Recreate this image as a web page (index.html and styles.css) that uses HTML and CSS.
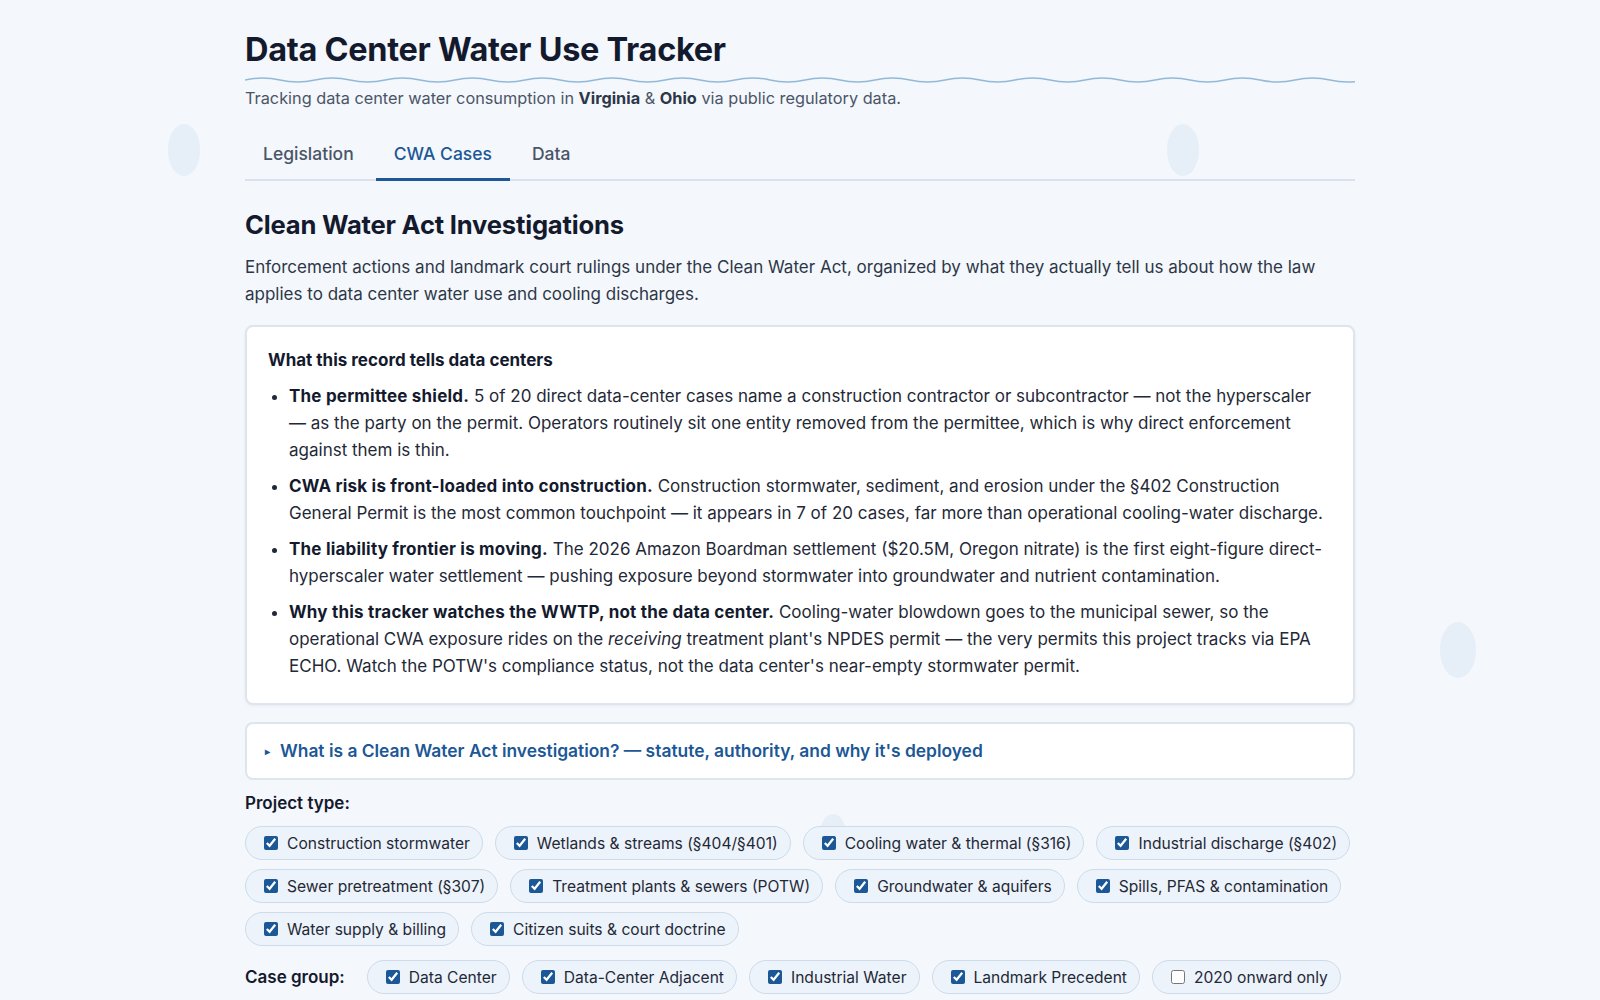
FILE: index.html
```html
<!DOCTYPE html>
<html lang="en">
<head>
    <meta charset="UTF-8">
    <meta name="viewport" content="width=device-width, initial-scale=1.0">
    <title>Data Center Water Use Tracker</title>
    <link rel="stylesheet" href="styles.css">
</head>
<body>
    <!-- decorative bubbles -->
    <span class="bubble bubble-a"></span>
    <span class="bubble bubble-b"></span>
    <span class="bubble bubble-c"></span>
    <span class="bubble bubble-d"></span>

    <div class="container">
        <header class="site-header">
            <h1>Data Center Water Use Tracker</h1>
            <svg class="wave" viewBox="0 0 1110 8" preserveAspectRatio="none">
                <path d="M0 4 q17.5 -4 35 0 t35 0 t35 0 t35 0 t35 0 t35 0 t35 0 t35 0 t35 0 t35 0 t35 0 t35 0 t35 0 t35 0 t35 0 t35 0 t35 0 t35 0 t35 0 t35 0 t35 0 t35 0 t35 0 t35 0 t35 0 t35 0 t35 0 t35 0 t35 0 t35 0 t35 0 t35 0" fill="none" stroke="#93b9d9" stroke-width="1.5"/>
            </svg>
            <p class="tagline">Tracking data center water consumption in <strong>Virginia</strong> &amp; <strong>Ohio</strong> via public regulatory data.</p>
        </header>

        <nav class="tabs">
            <a href="#" class="tab">Legislation</a>
            <a href="#" class="tab active">CWA Cases</a>
            <a href="#" class="tab">Data</a>
        </nav>

        <section class="panel">
            <h2>Clean Water Act Investigations</h2>
            <p class="intro">Enforcement actions and landmark court rulings under the Clean Water Act, organized by what they actually tell us about how the law applies to data center water use and cooling discharges.</p>

            <div class="card">
                <h3>What this record tells data centers</h3>
                <ul class="findings">
                    <li><strong>The permittee shield.</strong> 5 of 20 direct data-center cases name a construction contractor or subcontractor — not the hyperscaler — as the party on the permit. Operators routinely sit one entity removed from the permittee, which is why direct enforcement against them is thin.</li>
                    <li><strong>CWA risk is front-loaded into construction.</strong> Construction stormwater, sediment, and erosion under the §402 Construction General Permit is the most common touchpoint — it appears in 7 of 20 cases, far more than operational cooling-water discharge.</li>
                    <li><strong>The liability frontier is moving.</strong> The 2026 Amazon Boardman settlement ($20.5M, Oregon nitrate) is the first eight-figure direct-hyperscaler water settlement — pushing exposure beyond stormwater into groundwater and nutrient contamination.</li>
                    <li><strong>Why this tracker watches the WWTP, not the data center.</strong> Cooling-water blowdown goes to the municipal sewer, so the operational CWA exposure rides on the <em>receiving</em> treatment plant's NPDES permit — the very permits this project tracks via EPA ECHO. Watch the POTW's compliance status, not the data center's near-empty stormwater permit.</li>
                </ul>
            </div>

            <details class="explainer">
                <summary>What is a Clean Water Act investigation? — statute, authority, and why it's deployed</summary>
            </details>

            <div class="filter-group">
                <div class="filter-label">Project type:</div>
                <div class="chips">
                    <label class="chip"><input type="checkbox" checked> Construction stormwater</label>
                    <label class="chip"><input type="checkbox" checked> Wetlands &amp; streams (§404/§401)</label>
                    <label class="chip"><input type="checkbox" checked> Cooling water &amp; thermal (§316)</label>
                    <label class="chip"><input type="checkbox" checked> Industrial discharge (§402)</label>
                    <label class="chip"><input type="checkbox" checked> Sewer pretreatment (§307)</label>
                    <label class="chip"><input type="checkbox" checked> Treatment plants &amp; sewers (POTW)</label>
                    <label class="chip"><input type="checkbox" checked> Groundwater &amp; aquifers</label>
                    <label class="chip"><input type="checkbox" checked> Spills, PFAS &amp; contamination</label>
                    <label class="chip"><input type="checkbox" checked> Water supply &amp; billing</label>
                    <label class="chip"><input type="checkbox" checked> Citizen suits &amp; court doctrine</label>
                </div>
            </div>

            <div class="filter-row">
                <span class="filter-label">Case group:</span>
                <label class="chip"><input type="checkbox" checked> Data Center</label>
                <label class="chip"><input type="checkbox" checked> Data-Center Adjacent</label>
                <label class="chip"><input type="checkbox" checked> Industrial Water</label>
                <label class="chip"><input type="checkbox" checked> Landmark Precedent</label>
                <label class="chip"><input type="checkbox"> 2020 onward only</label>
            </div>
        </section>
    </div>
</body>
</html>
```
FILE: styles.css
```css
body {
    margin: 0;
    background: #f4f7fb;
    color: #1f2937;
    font-family: Inter, "Noto Sans", sans-serif;
}

.container {
    max-width: 1110px;
    margin: 0 auto;
    position: relative;
    z-index: 1;
}

/* Cabecera */
.site-header {
    padding-top: 30px;
}

h1 {
    margin: 0;
    font-size: 32.5px;
    font-weight: 700;
    color: #141a2e;
    letter-spacing: -0.3px;
}

.wave {
    display: block;
    width: 100%;
    height: 8px;
    margin-top: 7px;
}

.tagline {
    margin: 4px 0 0;
    font-size: 16.3px;
    color: #4a5568;
}

.tagline strong {
    color: #2d3748;
}

/* Pestañas */
.tabs {
    display: flex;
    gap: 4px;
    margin-top: 23px;
    border-bottom: 2px solid #d9e2ec;
}

.tab {
    padding: 12px 18px 14px;
    margin-bottom: -2px;
    font-size: 17.5px;
    font-weight: 500;
    color: #4a5568;
    text-decoration: none;
    border-bottom: 3px solid transparent;
}

.tab.active {
    color: #1c5796;
    border-bottom-color: #1c5796;
}

/* Contenido */
.panel h2 {
    margin: 28px 0 0;
    font-size: 25.6px;
    font-weight: 700;
    color: #141a2e;
    letter-spacing: -0.2px;
}

.intro {
    margin: 14px 0 0;
    font-size: 17px;
    line-height: 27px;
    color: #2d3748;
}

.card {
    margin-top: 17px;
    padding: 23px 21px 14px;
    background: #fff;
    border: 2px solid #dde5ee;
    border-radius: 8px;
    box-shadow: 0 1px 3px rgba(30, 50, 80, 0.06);
}

.card h3 {
    margin: 0;
    font-size: 17px;
    font-weight: 700;
    color: #141a2e;
}

.findings {
    margin: 13px 0 0;
    padding-left: 21px;
    font-size: 17px;
    line-height: 27px;
    color: #1f2937;
}

.findings li {
    margin-bottom: 9px;
}

.findings strong {
    color: #141a2e;
    letter-spacing: 0.2px;
}

.explainer {
    margin-top: 17px;
    padding: 16px 18px 17px;
    background: #fff;
    border: 2px solid #dde5ee;
    border-radius: 8px;
}

.explainer summary {
    list-style: none;
    font-size: 17.4px;
    font-weight: 600;
    color: #1c5796;
    cursor: pointer;
}

.explainer summary::-webkit-details-marker {
    display: none;
}

.explainer summary::before {
    content: "▸";
    display: inline-block;
    width: 15px;
    font-size: 10px;
    vertical-align: 2px;
}

/* Filtros */
.filter-group {
    margin-top: 13px;
}

.filter-label {
    font-size: 17px;
    font-weight: 600;
    color: #141a2e;
}

.chips {
    display: flex;
    flex-wrap: wrap;
    gap: 9px 12px;
    margin-top: 13px;
}

.chip {
    display: inline-flex;
    align-items: center;
    gap: 6px;
    padding: 6px 12px 6px 14px;
    height: 34px;
    box-sizing: border-box;
    font-size: 15.6px;
    color: #1f2937;
    background: #edf3fa;
    border: 1.5px solid #cddbea;
    border-radius: 999px;
}

.chip input {
    width: 14px;
    height: 14px;
    margin: 0 3px 0 4px;
    accent-color: #1c5796;
}

.filter-row {
    display: flex;
    align-items: center;
    gap: 12px;
    margin-top: 14px;
}

.filter-row .filter-label {
    margin-right: 10px;
}

/* Burbujas decorativas */
.bubble {
    position: absolute;
    border-radius: 50%;
    background: #e6eef8;
    z-index: 0;
}

.bubble-a {
    left: 168px;
    top: 124px;
    width: 32px;
    height: 52px;
}

.bubble-b {
    left: 1167px;
    top: 124px;
    width: 32px;
    height: 52px;
}

.bubble-c {
    left: 1440px;
    top: 622px;
    width: 36px;
    height: 56px;
}

.bubble-d {
    left: 820px;
    top: 814px;
    width: 26px;
    height: 40px;
}
```
